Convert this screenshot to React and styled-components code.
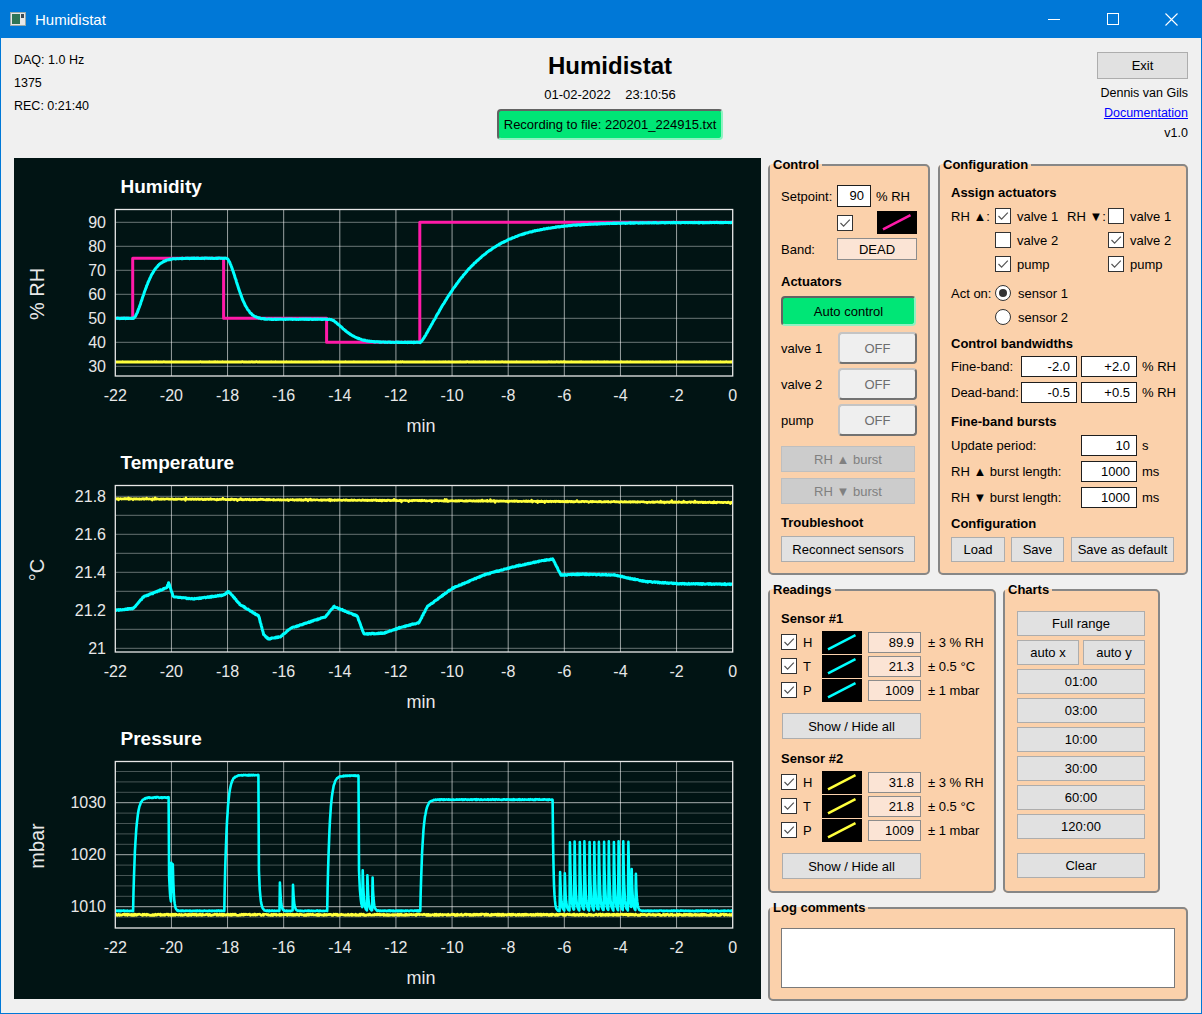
import React from 'react';
import styled, { createGlobalStyle, css } from 'styled-components';

const PEACH = '#fbd1ab';
const CYAN = '#00ffff';
const YELLOW = '#ffff3c';
const MAGENTA = '#ff1aa8';

const GlobalStyle = createGlobalStyle`
  html, body { margin: 0; padding: 0; background: #f0f0f0; overflow: hidden; }
  body { font-family: "Liberation Sans", Arial, sans-serif; font-size: 13px; color: #000; }
  * { box-sizing: border-box; }
`;

// ---------- data for the three plots (1 Hz samples, last 22 min) ----------
const N = 22 * 60;
const T = Array.from({ length: N + 1 }, (_, i) => -22 + i / 60);
const rnd = (i, s) => {
    const x = Math.sin(i * 12.9898 + s * 78.233) * 43758.5453;
    return x - Math.floor(x);
};
const jitter = (i, s) => rnd(i, s) - 0.5;
const snap = t => Math.round(t * 60) / 60;

const hum = t => {
    if (t < -21.35) return 50;
    if (t < -18.05) return 50 + 25 * (1 - Math.exp(-Math.pow((t + 21.35) / 0.55, 1.6)));
    if (t < -14.35) return 49.6 + 25.4 * Math.exp(-Math.pow((t + 18.05) / 0.55, 1.8));
    if (t < -11.12) return 40 + 9.6 * Math.exp(-Math.pow((t + 14.35) / 0.7, 1.6));
    return 40 + 49.9 * (1 - Math.exp(-Math.pow((t + 11.12) / 1.8, 1.2)));
};

const tempPts = [
    [-22, 21.2], [-21.36, 21.21], [-21.0, 21.27], [-20.16, 21.32], [-20.1, 21.345], [-19.93, 21.27],
    [-19.21, 21.26], [-18.14, 21.28], [-17.96, 21.3], [-17.55, 21.23], [-16.89, 21.17], [-16.71, 21.07],
    [-16.54, 21.05], [-16.12, 21.06], [-15.76, 21.105], [-14.51, 21.166], [-14.21, 21.22], [-13.38, 21.17],
    [-13.14, 21.075], [-12.43, 21.08], [-11.83, 21.11], [-11.18, 21.135], [-10.88, 21.22], [-9.99, 21.316],
    [-8.86, 21.386], [-7.79, 21.43], [-6.83, 21.46], [-6.41, 21.47], [-6.12, 21.386], [-5.4, 21.39],
    [-4.21, 21.386], [-3.74, 21.37], [-3.02, 21.35], [-1.83, 21.34], [0, 21.337],
];
const lerp = (pts, t) => {
    for (let k = 1; k < pts.length; k++) {
        if (t <= pts[k][0]) {
            const [t0, v0] = pts[k - 1];
            const [t1, v1] = pts[k];
            return v0 + (v1 - v0) * (t - t0) / (t1 - t0);
        }
    }
    return pts[pts.length - 1][1];
};

const BASE = 1009.2;
const pulses = [
    [-21.36, -20.08, 1031.0, 0.3, 0.05],
    [-18.12, -16.88, 1035.3, 0.3, 0.05],
    [-14.45, -13.31, 1035.2, 0.3, 0.05],
    [-11.14, -6.4, 1030.6, 0.6, 0.035],
].map(([r, f, l, d, k]) => [snap(r), snap(f), l, d, k]);
const spikes = [
    [-20.0, 8], [-19.95, 6.5], [-16.14, 5.5], [-15.66, 5.0],
    [-13.19, 7.2], [-13.02, 6.8], [-12.84, 6.3], [-6.15, 7.5], [-5.98, 7.2],
    ...Array.from({ length: 13 }, (_, k) => [-5.8 + k * 0.1733, 13.2]),
    [-3.6, 7.5], [-3.45, 7.0],
].map(([s, h]) => [snap(s), h]);

const pres = (t, i) => {
    let v = BASE + jitter(i, 7) * 0.15;
    for (const [r, f, lvl, drop, tau] of pulses) {
        if (t >= r && t < f) v += (lvl - BASE) * (1 - Math.exp(-(t - r) / 0.09));
        else if (t >= f) v += (lvl - BASE) * drop * Math.exp(-(t - f) / tau);
    }
    for (const [s, h] of spikes) if (t >= s - 1e-6) v += h * Math.exp(-(t - s) / 0.035);
    return v;
};

const series = {
    humSet: [[-22, 50], [-21.38, 50], [-21.38, 75], [-18.14, 75], [-18.14, 50], [-14.47, 50],
        [-14.47, 40], [-11.15, 40], [-11.15, 90], [0, 90]],
    humCyan: T.map((t, i) => [t, hum(t) + jitter(i, 1) * 0.25]),
    humYellow: T.map((t, i) => [t, 31.8 + jitter(i, 2) * 0.12]),
    tempCyan: T.map((t, i) => [t, lerp(tempPts, t) + jitter(i, 3) * 0.005]),
    tempYellow: T.map((t, i) => [t, 21.787 - (t + 22) * 0.0009 + jitter(i, 4) * 0.004
        + (rnd(i, 5) > 0.93 ? jitter(i, 6) * 0.014 : 0)]),
    presCyan: T.map((t, i) => [t, pres(t, i)]),
    presYellow: T.map((t, i) => [t, 1008.45 + jitter(i, 8) * 0.3]),
};

const range = (a, b, s) => {
    const out = [];
    for (let v = a; v <= b + s / 1000; v += s) out.push(Math.round(v * 1000) / 1000);
    return out;
};

const BOX = { l: 101.3, r: 718.7, t: 51.5, b: 218 };
const xOf = t => BOX.l + (t + 22) * (BOX.r - BOX.l) / 22;

const plots = [
    {
        id: 'hum', title: 'Humidity', ylabel: '% RH',
        yOf: v => 64.3 + (90 - v) * 2.4,
        grid: range(30, 90, 10).map(v => ({ v, a: 0.42 })),
        ticks: range(30, 90, 10).map(v => ({ v, label: String(v) })),
        lines: [
            { pts: series.humSet, color: MAGENTA, w: 3 },
            { pts: series.humYellow, color: YELLOW, w: 3 },
            { pts: series.humCyan, color: CYAN, w: 3 },
        ],
    },
    {
        id: 'temp', title: 'Temperature', ylabel: '°C',
        yOf: v => 214.3 - (v - 21) * 190,
        grid: range(21, 21.8, 0.1).map(v => ({ v, a: 0.4 })),
        ticks: [21, 21.2, 21.4, 21.6, 21.8].map(v => ({ v, label: String(v) })),
        lines: [
            { pts: series.tempYellow, color: YELLOW, w: 2.6 },
            { pts: series.tempCyan, color: CYAN, w: 3 },
        ],
    },
    {
        id: 'pres', title: 'Pressure', ylabel: 'mbar',
        yOf: v => 196.7 - (v - 1010) * 5.2,
        grid: range(1008, 1036, 2).map(v => ({ v, a: v % 10 === 0 ? 0.65 : 0.28 })),
        ticks: [1010, 1020, 1030].map(v => ({ v, label: String(v) })),
        lines: [
            { pts: series.presYellow, color: YELLOW, w: 2.6 },
            { pts: series.presCyan, color: CYAN, w: 2.6 },
        ],
    },
];

// ---------- window chrome ----------
const Window = styled.div`
  width: 1202px;
  height: 1014px;
  border: 1px solid #0078d7;
  border-top: 0;
  background: #f0f0f0;
  display: flex;
  flex-direction: column;
  overflow: hidden;
`;

const TitleBar = styled.div`
  height: 38px;
  flex: none;
  background: #0078d7;
  color: #fff;
  display: flex;
  align-items: center;
  padding-left: 9px;
  font-size: 15px;
`;

const WinTitle = styled.span`
  margin-left: 9px;
  flex: 1;
`;

const Caption = styled.span`
  width: 59px;
  height: 38px;
  display: flex;
  align-items: center;
  justify-content: center;
`;

// ---------- header ----------
const Header = styled.header`
  height: 119px;
  flex: none;
  display: grid;
  grid-template-columns: 483px 226px 1fr;
  padding: 0 13px;
`;

const Stats = styled.div`
  padding-top: 11px;
  font-size: 12.5px;
  line-height: 23px;
`;

const CenterCol = styled.div`
  display: flex;
  flex-direction: column;
  align-items: center;
`;

const AppTitle = styled.h1`
  margin: 14px 0 0;
  font-size: 24px;
  line-height: 28px;
  font-weight: bold;
`;

const DateLine = styled.div`
  margin-top: 7px;
  font-size: 13px;
  line-height: 16px;
  white-space: pre;
`;

const SideCol = styled.div`
  display: flex;
  flex-direction: column;
  align-items: flex-end;
  font-size: 12.5px;
  line-height: 20px;
`;

const Author = styled.div`
  margin-top: 4px;
`;

const Link = styled.a`
  color: #0000ff;
  text-decoration: underline;
`;

// ---------- buttons, inputs ----------
const kinds = {
    plain: css`background: #e1e1e1; border: 1px solid #adadad;`,
    field: css`background: #fbe4d5; border: 1px solid #8c8c8c;`,
    toggle: css`
      background: #efefef; border: 2px solid; border-radius: 4px; color: #6d6d6d;
      border-color: #c4c4c4 #727272 #727272 #c4c4c4;
    `,
    green: css`
      background: #00e676; border: 2px solid; border-radius: 4px;
      border-color: #636363 #8ff2c2 #8ff2c2 #636363;
    `,
    disabled: css`background: #cccccc; border: 1px solid #bfbfbf; color: #808080;`,
};

const Button = styled.button`
  flex: none;
  width: ${p => p.$w}px;
  height: ${p => p.$h}px;
  margin: ${p => p.$mt || 0}px 0 0 ${p => p.$ml || 0}px;
  padding: 0;
  font: inherit;
  font-size: 13px;
  color: #000;
  text-align: center;
  ${p => kinds[p.$kind || 'plain']}
`;

const TextBox = styled.div`
  flex: none;
  width: ${p => p.$w}px;
  height: ${p => p.$h || 21}px;
  margin-left: ${p => p.$ml || 0}px;
  background: ${p => (p.$tint ? '#fbe4d5' : '#fff')};
  border: 1px solid ${p => (p.$tint ? '#8c8c8c' : '#1e1e1e')};
  text-align: right;
  padding-right: 6px;
  line-height: ${p => (p.$h || 21) - 2}px;
`;

const CheckBox = styled.span`
  flex: none;
  width: 16px;
  height: 16px;
  background: #fff;
  border: 1px solid #333;
  display: inline-flex;
  align-items: center;
  justify-content: center;
`;

const Check = ({ on }) => (
    <CheckBox>
        {on && (
            <svg width="14" height="14" viewBox="0 0 14 14">
                <path d="M2.5 7 L5.6 10.2 L11.8 3.6" fill="none" stroke="#555" strokeWidth="1.2" />
            </svg>
        )}
    </CheckBox>
);

const Radio = styled.span`
  flex: none;
  width: 16px;
  height: 16px;
  border-radius: 50%;
  border: 1px solid #333;
  background: #fff;
  display: inline-flex;
  align-items: center;
  justify-content: center;
  &::after {
    content: '';
    width: 8px;
    height: 8px;
    border-radius: 50%;
    background: ${p => (p.$on ? '#333' : 'transparent')};
  }
`;

const SwatchBox = styled.span`
  flex: none;
  width: 40px;
  height: 23px;
  background: #000;
  margin-left: ${p => p.$ml || 0}px;
`;

const Swatch = ({ color, ml }) => (
    <SwatchBox $ml={ml}>
        <svg width="40" height="23" viewBox="0 0 40 23">
            <line x1="6" y1="18.3" x2="33.5" y2="4.2" stroke={color} strokeWidth="2.6" />
        </svg>
    </SwatchBox>
);

// ---------- group boxes ----------
const Group = styled.fieldset`
  margin: 0;
  padding: 0;
  min-width: 0;
  flex: none;
  width: ${p => p.$w}px;
  height: ${p => p.$h}px;
  border: 2px solid #878787;
  border-radius: 5px;
  background: ${PEACH};
`;

const Legend = styled.legend`
  margin: 0;
  padding: 0 3px;
  font-weight: bold;
  font-size: 13px;
  line-height: 16px;
`;

const Body = styled.div`
  display: flex;
  flex-direction: column;
  align-items: flex-start;
  padding: 0 ${p => p.$px || 11}px;
`;

const SectionHead = styled.div`
  margin-top: ${p => p.$mt}px;
  font-weight: bold;
  font-size: 13px;
  line-height: 16px;
`;

const Row = styled.div`
  display: flex;
  align-items: center;
  height: ${p => p.$h}px;
  margin-top: ${p => p.$mt || 0}px;
`;

const Label = styled.span`
  flex: none;
  width: ${p => p.$w}px;
  margin-left: ${p => p.$ml || 0}px;
  white-space: nowrap;
`;

const Unit = styled.span`
  margin-left: ${p => p.$ml || 5}px;
  white-space: nowrap;
`;

const AssignGrid = styled.div`
  margin-top: ${p => p.$mt}px;
  display: grid;
  grid-template-columns: ${p => p.$cols};
  grid-auto-rows: 24px;
  align-items: center;
`;

const Option = styled.span`
  display: flex;
  align-items: center;
  gap: ${p => p.$gap || 6}px;
  white-space: nowrap;
`;

const LogBox = styled.div`
  margin-top: 12px;
  width: 394px;
  height: 60px;
  background: #fff;
  border: 1px solid #7a7a7a;
`;

// ---------- layout ----------
const Main = styled.div`
  display: flex;
  align-items: flex-start;
  padding-left: 13px;
`;

const ChartPane = styled.div`
  flex: none;
  width: 747px;
  height: 841px;
  margin-top: 1px;
  background: #011414;
  display: flex;
  flex-direction: column;
`;

// each plot is 276px apart; the svg is a bit taller so the "min" label has room
const PlotSvg = styled.svg`
  display: block;
  flex: none;
  margin-bottom: -8px;
  overflow: visible;
  font-family: "Liberation Sans", Arial, sans-serif;
`;

const SidePanels = styled.div`
  margin-left: 7px;
  display: flex;
  flex-direction: column;
  gap: 7px;
`;

const PanelRow = styled.div`
  display: flex;
  align-items: flex-start;
  gap: ${p => p.$gap}px;
`;

const toPoints = (pts, yOf) => pts.map(([t, v]) => `${xOf(t).toFixed(1)},${yOf(v).toFixed(1)}`).join(' ');

const Plot = ({ plot }) => {
    const { id, title, ylabel, yOf, grid, ticks, lines } = plot;
    const xt = range(-22, 0, 2);
    return (
        <PlotSvg width="747" height="284" viewBox="0 0 747 284">
            <defs>
                <clipPath id={`clip-${id}`}>
                    <rect x={BOX.l} y={BOX.t} width={BOX.r - BOX.l} height={BOX.b - BOX.t} />
                </clipPath>
            </defs>
            {grid.map(g => (
                <line key={g.v} x1={BOX.l} x2={BOX.r} y1={yOf(g.v)} y2={yOf(g.v)}
                    stroke={`rgba(255,255,255,${g.a})`} strokeWidth="1" />
            ))}
            {xt.slice(1, -1).map(t => (
                <line key={t} x1={xOf(t)} x2={xOf(t)} y1={BOX.t} y2={BOX.b}
                    stroke="rgba(255,255,255,0.6)" strokeWidth="1" />
            ))}
            <g clipPath={`url(#clip-${id})`}>
                {lines.map((l, k) => (
                    <polyline key={k} points={toPoints(l.pts, yOf)} fill="none" stroke={l.color}
                        strokeWidth={l.w} strokeLinejoin="round" />
                ))}
            </g>
            <rect x={BOX.l} y={BOX.t} width={BOX.r - BOX.l} height={BOX.b - BOX.t}
                fill="none" stroke="#e8e8e8" strokeWidth="1.3" />
            {ticks.map(tk => (
                <text key={tk.v} x="92" y={yOf(tk.v)} fill="#e8e8e8" fontSize="16"
                    textAnchor="end" dominantBaseline="central">{tk.label}</text>
            ))}
            {xt.map(t => (
                <text key={t} x={xOf(t)} y="237" fill="#e8e8e8" fontSize="16"
                    textAnchor="middle" dominantBaseline="central">{t}</text>
            ))}
            <text x="106.5" y="28" fill="#fff" fontSize="19" fontWeight="bold"
                dominantBaseline="central">{title}</text>
            <text x="407" y="268" fill="#e8e8e8" fontSize="18" textAnchor="middle"
                dominantBaseline="central">min</text>
            <text transform="translate(22.7 136) rotate(-90)" fill="#e8e8e8" fontSize="20"
                textAnchor="middle" dominantBaseline="central">{ylabel}</text>
        </PlotSvg>
    );
};

const WindowIcon = () => (
    <svg width="16" height="14" viewBox="0 0 16 14">
        <rect x="0.5" y="0.5" width="15" height="13" fill="#e8e8e8" stroke="#9aa" />
        <rect x="2" y="2" width="8" height="10" fill="#2f7556" />
        <rect x="11" y="2" width="3" height="4" fill="#3b4b55" />
    </svg>
);

const ReadingRow = ({ letter, color, value, unit, mt }) => (
    <Row $h={24} $mt={mt}>
        <Check on />
        <Label $w={19} $ml={6}>{letter}</Label>
        <Swatch color={color} />
        <TextBox $w={53} $ml={6} $tint>{value}</TextBox>
        <Unit $ml={7}>{unit}</Unit>
    </Row>
);

const App = () => (
    <Window>
        <GlobalStyle />
        <TitleBar>
            <WindowIcon />
            <WinTitle>Humidistat</WinTitle>
            <Caption>
                <svg width="12" height="12" viewBox="0 0 12 12"><line x1="0" y1="6.5" x2="12" y2="6.5" stroke="#fff" /></svg>
            </Caption>
            <Caption>
                <svg width="12" height="12" viewBox="0 0 12 12"><rect x="0.5" y="0.5" width="11" height="11" fill="none" stroke="#fff" /></svg>
            </Caption>
            <Caption>
                <svg width="13" height="13" viewBox="0 0 13 13"><path d="M0.5 0.5 L12.5 12.5 M12.5 0.5 L0.5 12.5" stroke="#fff" strokeWidth="1.1" /></svg>
            </Caption>
        </TitleBar>

        <Header>
            <Stats>
                <div>DAQ: 1.0 Hz</div>
                <div>1375</div>
                <div>REC: 0:21:40</div>
            </Stats>
            <CenterCol>
                <AppTitle>Humidistat</AppTitle>
                <DateLine>{'01-02-2022    23:10:56'}</DateLine>
                <Button $kind="green" $w={226} $h={31} $mt={6}>Recording to file: 220201_224915.txt</Button>
            </CenterCol>
            <SideCol>
                <Button $w={91} $h={27} $mt={14}>Exit</Button>
                <Author>Dennis van Gils</Author>
                <Link href="#doc">Documentation</Link>
                <div>v1.0</div>
            </SideCol>
        </Header>

        <Main>
            <ChartPane>
                {plots.map(p => <Plot key={p.id} plot={p} />)}
            </ChartPane>

            <SidePanels>
                <PanelRow $gap={8}>
                    <Group $w={162} $h={418}>
                        <Legend>Control</Legend>
                        <Body>
                            <Row $h={22} $mt={12}>
                                <Label $w={56}>Setpoint:</Label>
                                <TextBox $w={34} $h={22}>90</TextBox>
                                <Unit>% RH</Unit>
                            </Row>
                            <Row $h={23} $mt={4}>
                                <Label $w={56} />
                                <Check on />
                                <Swatch color={MAGENTA} ml={24} />
                            </Row>
                            <Row $h={22} $mt={4}>
                                <Label $w={56}>Band:</Label>
                                <Button $kind="field" $w={80} $h={22}>DEAD</Button>
                            </Row>
                            <SectionHead $mt={14}>Actuators</SectionHead>
                            <Button $kind="green" $w={135} $h={30} $mt={6}>Auto control</Button>
                            {['valve 1', 'valve 2', 'pump'].map((name, k) => (
                                <Row key={name} $h={32} $mt={k === 0 ? 6 : 4}>
                                    <Label $w={57}>{name}</Label>
                                    <Button $kind="toggle" $w={79} $h={32}>OFF</Button>
                                </Row>
                            ))}
                            <Button $kind="disabled" $w={134} $h={26} $mt={10}>RH ▲ burst</Button>
                            <Button $kind="disabled" $w={134} $h={26} $mt={6}>RH ▼ burst</Button>
                            <SectionHead $mt={11}>Troubleshoot</SectionHead>
                            <Button $w={134} $h={26} $mt={5}>Reconnect sensors</Button>
                        </Body>
                    </Group>

                    <Group $w={250} $h={418}>
                        <Legend>Configuration</Legend>
                        <Body>
                            <SectionHead $mt={12}>Assign actuators</SectionHead>
                            <AssignGrid $mt={3} $cols="44px 72px 41px auto">
                                <span>RH ▲:</span>
                                <Option><Check on />valve 1</Option>
                                <span>RH ▼:</span>
                                <Option><Check />valve 1</Option>
                                <span />
                                <Option><Check />valve 2</Option>
                                <span />
                                <Option><Check on />valve 2</Option>
                                <span />
                                <Option><Check on />pump</Option>
                                <span />
                                <Option><Check on />pump</Option>
                            </AssignGrid>
                            <AssignGrid $mt={5} $cols="44px auto">
                                <span>Act on:</span>
                                <Option $gap={7}><Radio $on />sensor 1</Option>
                                <span />
                                <Option $gap={7}><Radio />sensor 2</Option>
                            </AssignGrid>
                            <SectionHead $mt={7}>Control bandwidths</SectionHead>
                            <Row $h={26} $mt={1}>
                                <Label $w={70}>Fine-band:</Label>
                                <TextBox $w={56}>-2.0</TextBox>
                                <TextBox $w={56} $ml={4}>+2.0</TextBox>
                                <Unit>% RH</Unit>
                            </Row>
                            <Row $h={26}>
                                <Label $w={70}>Dead-band:</Label>
                                <TextBox $w={56}>-0.5</TextBox>
                                <TextBox $w={56} $ml={4}>+0.5</TextBox>
                                <Unit>% RH</Unit>
                            </Row>
                            <SectionHead $mt={9}>Fine-band bursts</SectionHead>
                            <Row $h={26} $mt={2}>
                                <Label $w={130}>Update period:</Label>
                                <TextBox $w={56}>10</TextBox>
                                <Unit>s</Unit>
                            </Row>
                            <Row $h={26}>
                                <Label $w={130}>RH ▲ burst length:</Label>
                                <TextBox $w={56}>1000</TextBox>
                                <Unit>ms</Unit>
                            </Row>
                            <Row $h={26}>
                                <Label $w={130}>RH ▼ burst length:</Label>
                                <TextBox $w={56}>1000</TextBox>
                                <Unit>ms</Unit>
                            </Row>
                            <SectionHead $mt={6}>Configuration</SectionHead>
                            <Row $h={25} $mt={5}>
                                <Button $w={54} $h={25}>Load</Button>
                                <Button $w={53} $h={25} $ml={6}>Save</Button>
                                <Button $w={103} $h={25} $ml={7}>Save as default</Button>
                            </Row>
                        </Body>
                    </Group>
                </PanelRow>

                <PanelRow $gap={7}>
                    <Group $w={228} $h={311}>
                        <Legend>Readings</Legend>
                        <Body>
                            <SectionHead $mt={13}>Sensor #1</SectionHead>
                            <ReadingRow mt={3} letter="H" color={CYAN} value="89.9" unit="± 3 % RH" />
                            <ReadingRow letter="T" color={CYAN} value="21.3" unit="± 0.5 °C" />
                            <ReadingRow letter="P" color={CYAN} value="1009" unit="± 1 mbar" />
                            <Button $w={139} $h={26} $mt={11} $ml={1}>Show / Hide all</Button>
                            <SectionHead $mt={12}>Sensor #2</SectionHead>
                            <ReadingRow mt={3} letter="H" color={YELLOW} value="31.8" unit="± 3 % RH" />
                            <ReadingRow letter="T" color={YELLOW} value="21.8" unit="± 0.5 °C" />
                            <ReadingRow letter="P" color={YELLOW} value="1009" unit="± 1 mbar" />
                            <Button $w={139} $h={26} $mt={11} $ml={1}>Show / Hide all</Button>
                        </Body>
                    </Group>

                    <Group $w={157} $h={311}>
                        <Legend>Charts</Legend>
                        <Body $px={12}>
                            <Button $w={128} $h={25} $mt={13}>Full range</Button>
                            <Row $h={25} $mt={4}>
                                <Button $w={62} $h={25}>auto x</Button>
                                <Button $w={62} $h={25} $ml={4}>auto y</Button>
                            </Row>
                            {['01:00', '03:00', '10:00', '30:00', '60:00', '120:00'].map(r => (
                                <Button key={r} $w={128} $h={25} $mt={4}>{r}</Button>
                            ))}
                            <Button $w={128} $h={25} $mt={14}>Clear</Button>
                        </Body>
                    </Group>
                </PanelRow>

                <Group $w={420} $h={101}>
                    <Legend>Log comments</Legend>
                    <Body>
                        <LogBox />
                    </Body>
                </Group>
            </SidePanels>
        </Main>
    </Window>
);

export default App;
